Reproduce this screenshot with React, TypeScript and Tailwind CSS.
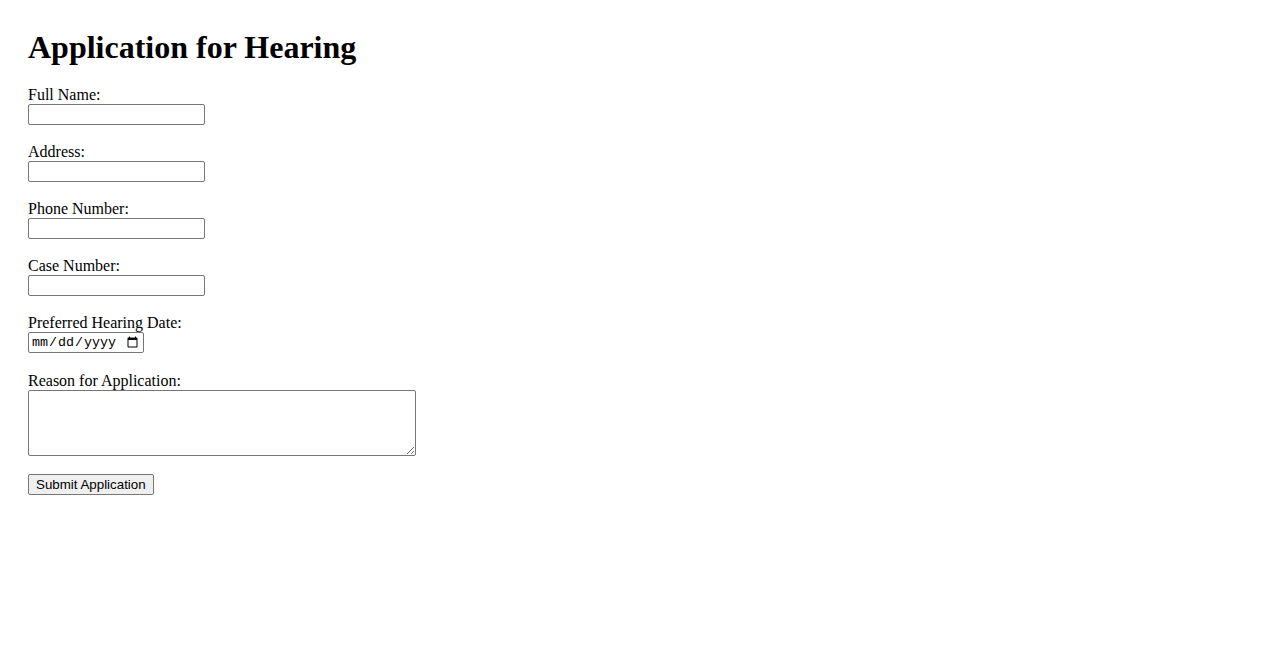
import React from 'react';

const fields = [
  { id: 'fullName', label: 'Full Name:' },
  { id: 'address', label: 'Address:' },
  { id: 'phone', label: 'Phone Number:' },
  { id: 'caseNumber', label: 'Case Number:' },
];

const labelCls = 'block text-[16px] leading-[22px] h-[20px]';

const inputCls =
  'block w-[177px] h-[21px] border border-[#767676] rounded-[2px] bg-white px-[2px] py-[1px] text-[13.33px] font-["Liberation_Sans",Arial,sans-serif]';

const App: React.FC = () => {
  return (
    <div className="min-h-screen bg-white text-black font-['Liberation_Serif','Times_New_Roman',serif] px-[28px] pt-[28px]">
      <h1 className="text-[32px] font-bold leading-[39px] mb-[17px]">Application for Hearing</h1>

      <form onSubmit={(e) => e.preventDefault()}>
        {fields.map((f) => (
          <div key={f.id} className="mb-[16px]">
            <label htmlFor={f.id} className={labelCls}>
              {f.label}
            </label>
            <input id={f.id} type="text" className={inputCls} />
          </div>
        ))}

        <div className="mb-[17px]">
          <label htmlFor="hearingDate" className={labelCls}>
            Preferred Hearing Date:
          </label>
          <input
            id="hearingDate"
            type="date"
            className="block w-[116px] h-[21px] border border-[#767676] rounded-[2px] bg-white px-[2px] py-[1px] text-[13.33px] font-['Liberation_Mono','Courier_New',monospace]"
          />
        </div>

        <div className="mb-[18px]">
          <label htmlFor="reason" className={labelCls}>
            Reason for Application:
          </label>
          <textarea
            id="reason"
            className="block w-[388px] h-[66px] border border-[#767676] rounded-[2px] bg-white px-[2px] py-[2px] text-[13.33px] font-['Liberation_Mono','Courier_New',monospace]"
          />
        </div>

        <button
          type="submit"
          className="block h-[21px] px-[7px] border border-[#767676] rounded-[2px] bg-[#efefef] text-[13.33px] leading-[17px] font-['Liberation_Sans',Arial,sans-serif]"
        >
          Submit Application
        </button>
      </form>
    </div>
  );
};

export default App;
